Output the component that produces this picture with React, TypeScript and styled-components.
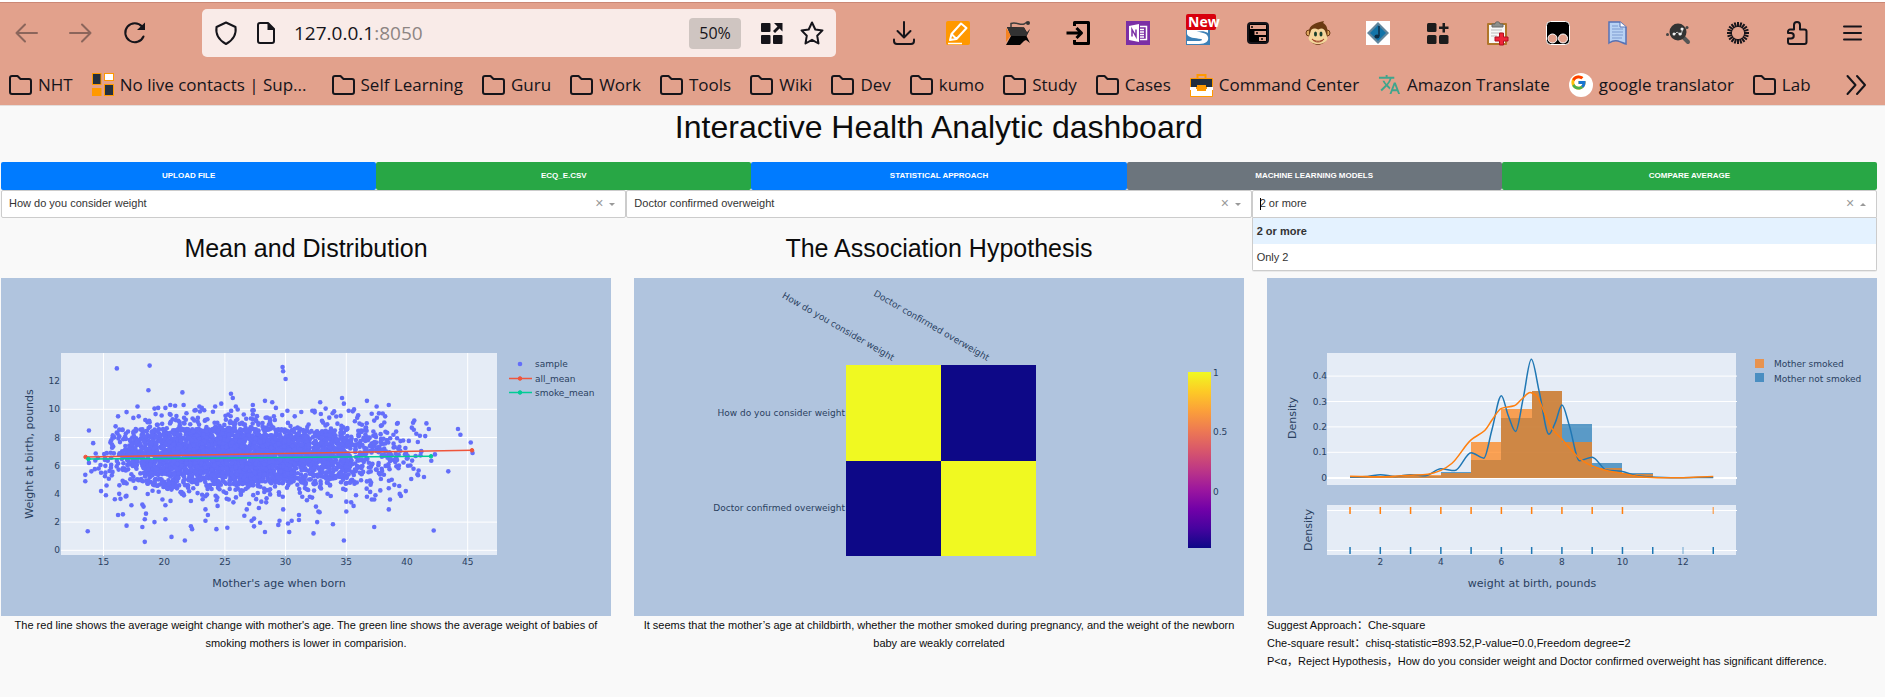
import React, { useMemo } from "react";
import styled, { createGlobalStyle } from "styled-components";
import { FcGoogle } from "react-icons/fc";
import { MdTranslate } from "react-icons/md";

const GlobalStyle = createGlobalStyle`
  * { box-sizing: border-box; }
  body {
    margin: 0;
    background: #f9f9f9;
    color: #0c0c0c;
    font-family: "Liberation Sans", Arial, "Noto Sans CJK SC", sans-serif;
    font-size: 11px;
    line-height: 18px;
  }
  h1, h2, p, ul, figure { margin: 0; padding: 0; }
  button { border: 0; padding: 0; background: none; font: inherit; color: inherit; cursor: pointer; }
`;

/* ---------- browser chrome ---------- */

const Chrome = styled.header`
  display: flex;
  flex-direction: column;
  background: #e2a18c;
  border-top: 2px solid #ffffff;
  border-bottom: 1px solid #e4dedc;
  box-shadow: inset 0 1px 0 #cb8876;
  font-family: "Open Sans", "Noto Sans", sans-serif;
`;

const NavRow = styled.div`
  display: flex;
  align-items: center;
  height: 62px;
  padding: 0 21px 0 15px;
`;

const NavButtons = styled.nav`
  display: flex;
  gap: 30px;
  margin-right: 55px;
`;

const IconButton = styled.button<{ $dim?: boolean }>`
  display: flex;
  flex: none;
  align-items: center;
  justify-content: center;
  width: 24px;
  height: 24px;
  opacity: ${(p) => (p.$dim ? 0.42 : 1)};
  svg { display: block; overflow: visible; }
`;

const AddressBar = styled.div`
  display: flex;
  flex: 0 1 634px;
  align-items: center;
  gap: 16px;
  height: 48px;
  padding: 0 12px 0 12px;
  border-radius: 5px;
  background: #f9ebe8;
`;

const Address = styled.div`
  flex: 1;
  font-size: 19px;
  line-height: 28px;
  color: #15141a;
  span { color: #8d8583; }
`;

const ZoomLevel = styled.button`
  width: 52px;
  height: 31px;
  margin-right: 3px;
  border-radius: 4px;
  background: #cfc5c1;
  font-size: 16px;
  color: #15141a;
`;

const ToolbarIcons = styled.div`
  display: flex;
  flex: 1;
  align-items: center;
  justify-content: space-between;
  margin-left: 56px;
`;

const ExtensionIcons = styled.div`
  display: flex;
  align-items: center;
  gap: 36px;
`;

const BookmarkRow = styled.nav`
  display: flex;
  align-items: center;
  height: 41px;
  padding: 0 16px 0 9px;
`;

const Bookmark = styled.a<{ $wide?: boolean }>`
  display: flex;
  flex: none;
  align-items: center;
  gap: 6px;
  margin-right: ${(p) => (p.$wide ? 25 : 19)}px;
  font-size: 17px;
  line-height: 24px;
  color: #15141a;
  text-decoration: none;
  white-space: nowrap;
  svg { display: block; flex: none; }
`;

const Overflow = styled(IconButton)`
  margin-left: auto;
`;

const stroke = {
  fill: "none",
  stroke: "#15141a",
  strokeWidth: 2,
  strokeLinecap: "round" as const,
  strokeLinejoin: "round" as const,
};

const Glyph = ({ children, size = 24 }: { children: React.ReactNode; size?: number }) => (
  <svg width={size} height={size} viewBox="0 0 24 24" aria-hidden="true">
    {children}
  </svg>
);

const FolderIcon = () => (
  <svg width="23" height="22" viewBox="0 0 23 22" aria-hidden="true">
    <path {...stroke} d="M3 2h5.500l3 3H20a2 2 0 0 1 2 2v11a2 2 0 0 1-2 2H3a2 2 0 0 1-2-2V4a2 2 0 0 1 2-2z" />
  </svg>
);

const ContactsIcon = () => (
  <svg width="22" height="23" viewBox="0 0 22 23" aria-hidden="true">
    <rect x="0.500" y="0.500" width="8.500" height="11" fill="#232f3e" stroke="#f90" />
    <rect x="12.500" y="0.500" width="9" height="7" fill="#fff" stroke="#f90" />
    <rect x="0.500" y="15.500" width="8.500" height="7" fill="#f90" stroke="#f90" />
    <rect x="12.500" y="11.500" width="9" height="11" fill="#232f3e" stroke="#f90" />
  </svg>
);

const CaseIcon = () => (
  <svg width="23" height="24" viewBox="0 0 23 24" aria-hidden="true">
    <path d="M7.500 6V2h8v4" fill="none" stroke="#f90" strokeWidth="2" />
    <rect x="0" y="5" width="23" height="19" rx="1" fill="#f90" />
    <rect x="1" y="6" width="21" height="8" fill="#232f3e" />
    <path d="M1 16h21v7H1z" fill="#fff" />
    <path d="M0 14h6v3H0zM17 14h6v3h-6z" fill="#fff" />
    <rect x="7" y="12" width="9" height="6" fill="#f90" />
  </svg>
);

const GoogleIcon = () => (
  <svg width="24" height="24" viewBox="0 0 24 24" aria-hidden="true">
    <circle cx="12" cy="12" r="12" fill="#fff" />
    <FcGoogle x="1" y="1" width="22" height="22" />
  </svg>
);

const bookmarks: { label: string; icon?: React.ReactNode; wide?: boolean }[] = [
  { label: "NHT" },
  { label: "No live contacts | Sup...", icon: <ContactsIcon />, wide: true },
  { label: "Self Learning" },
  { label: "Guru" },
  { label: "Work" },
  { label: "Tools" },
  { label: "Wiki" },
  { label: "Dev" },
  { label: "kumo" },
  { label: "Study" },
  { label: "Cases" },
  { label: "Command Center", icon: <CaseIcon /> },
  { label: "Amazon Translate", icon: <MdTranslate size={23} color="#3fa58c" /> },
  { label: "google translator", icon: <GoogleIcon /> },
  { label: "Lab" },
];

const rays = Array.from({ length: 20 }, (_, i) => (i * Math.PI) / 10);

type Tool = { name: string; art: React.ReactNode };

const extensions: Tool[] = [
  {
    name: "Notes",
    art: (
      <>
        <rect width="24" height="24" rx="2" fill="#ff9800" />
        <path d="M4 19l1.500-6L15 2.500l5.500 4.500L10.500 18zM5.500 13l5 5" fill="none" stroke="#fff" strokeWidth="2" strokeLinejoin="round" />
        <path d="M2 22.500h14" stroke="#fff" strokeWidth="1.500" />
      </>
    ),
  },
  {
    name: "Reader",
    art: (
      <>
        <path d="M0 7l5 7-5 7z" fill="#f58220" />
        <path d="M1 6l17 .5 3 5L24 8l-3.500 7L24 22l-4-3-2 1-4 4H0l5-9z" fill="#050505" />
        <path d="M1 6l17 .5 3 5L24 8l-3.500 7H5z" fill="#333" />
        <path d="M5 6V2.500c5-2 9 2 13 .5l3-2" fill="none" stroke="#3d3d3d" strokeWidth="1.500" />
        <circle cx="22" cy="2" r="2" fill="#333" />
      </>
    ),
  },
  {
    name: "Sign in",
    art: (
      <path d="M8.500 5V1.500h14v21h-14V19M0.500 12H15M10.500 7l5 5-5 5" fill="none" stroke="#000" strokeWidth="3" strokeLinejoin="round" />
    ),
  },
  {
    name: "OneNote",
    art: (
      <>
        <rect width="24" height="24" fill="#7b2fa5" />
        <path d="M3 5l10-2v18L3 19z" fill="#fff" />
        <path d="M6 15.500v-7l4 7v-7" fill="none" stroke="#7b2fa5" strokeWidth="1.500" />
        <path d="M14 5.500h6.500v13H14M14 8.500h4M14 11h4M14 13.500h4M14 16h4" fill="none" stroke="#fff" strokeWidth="1.500" />
      </>
    ),
  },
  {
    name: "Session",
    art: (
      <>
        <rect y="1" width="24" height="23" fill="#3d80b6" />
        <path d="M1 9v4c1 4 8 4 14 5 2 .5 1 2-3 2H1v3h12c7 0 10-3 9-7-1-5-8-4-12-6V9z" fill="#fff" />
        <path d="M2 9h20v3c-3-2-8-2-12-1z" fill="#fff" />
        <rect y="-7" width="30" height="16" rx="2" fill="#d8000c" />
        <text x="2" y="6" fontSize="14" fontWeight="700" fill="#fff">New</text>
      </>
    ),
  },
  {
    name: "Storage",
    art: (
      <>
        <rect x="2" y="2" width="20" height="20" rx="3" fill="#000" stroke="#15141a" strokeWidth="2" />
        <path d="M4 4h16v4H4zM8.500 10H20v4H8.500zM13 16h7v4h-7z" fill="#e2a18c" />
        <path d="M5 6h2M10 12h2M15 18h2" stroke="#000" strokeWidth="1.500" />
      </>
    ),
  },
  {
    name: "Scripts",
    art: (
      <>
        <circle cx="3" cy="12" r="3" fill="#dca45c" stroke="#6b3a12" />
        <circle cx="21" cy="12" r="3" fill="#dca45c" stroke="#6b3a12" />
        <path d="M3 11C3 4 9 2 18 0c-1 2-1 2 0 2.500C22 5 22 12 21 17c-2 9-16 9-18 0z" fill="#6b3a12" />
        <path d="M4.500 11c1-5 5-3.500 8-2.500 3-2 6-1 7 2.500l2 6c-1 8-18 8-19 0z" fill="#f5d69c" />
        <ellipse cx="9.500" cy="13" rx="1.500" ry="2.500" fill="#173f2d" />
        <ellipse cx="15" cy="13" rx="1.500" ry="2.500" fill="#173f2d" />
        <path d="M6 18c4 3 8 3 12 0-2 4-10 4-12 0z" fill="#fff" stroke="#a34b2a" strokeWidth="1" />
      </>
    ),
  },
  {
    name: "Music",
    art: (
      <>
        <rect width="24" height="24" fill="#fff" />
        <path d="M12 1l11 11-11 11L1 12z" fill="#60859c" />
        <path d="M12 4l8 8-8 8-8-8z" fill="#1274a8" />
        <path d="M13 5v10" stroke="#0c2e46" strokeWidth="1.500" />
        <ellipse cx="11" cy="15.500" rx="2.500" ry="2" fill="#0c2e46" />
      </>
    ),
  },
  {
    name: "Add widget",
    art: (
      <g fill="#1c1c1c">
        <rect x="1" y="2" width="9.500" height="9" rx="1.500" />
        <rect x="1" y="14" width="9.500" height="9" rx="1.500" />
        <rect x="13" y="14" width="9.500" height="9" rx="1.500" />
        <path d="M16.500 2h2.500v3.500h3.500V8H19v3.500h-2.500V8H13V5.500h3.500z" />
      </g>
    ),
  },
  {
    name: "Clipboard",
    art: (
      <>
        <rect x="1" y="2" width="20" height="22" rx="1" fill="#b0762a" />
        <path d="M3 4h16v18H3z" fill="#f8f8f8" />
        <path d="M5 9h11M5 12h11M5 15h6" stroke="#bbb" />
        <path d="M6 6V3h3c0-3 5-3 5 0h3v3z" fill="#8c8f8c" stroke="#666" />
        <path d="M13.500 12h4v4h4.500v4h-4.500v4h-4v-4H9v-4h4.500z" fill="#ef2438" stroke="#b10f20" />
      </>
    ),
  },
  {
    name: "User scripts",
    art: (
      <>
        <rect x="0.500" y="0.500" width="23" height="23" rx="4" fill="#000" stroke="#fff" />
        <circle cx="6.500" cy="17.500" r="4.500" fill="#e2a18c" stroke="#fff" />
        <circle cx="17" cy="17.500" r="4.500" fill="#e2a18c" stroke="#fff" />
      </>
    ),
  },
  {
    name: "Read later",
    art: (
      <>
        <path d="M3 1h11l6 5v17c-3-1-5-2-8-3-4-1-6 0-9 2z" fill="#b8d2f4" stroke="#5672b5" strokeWidth="1.500" />
        <path d="M14 1v5h6" fill="#fff" stroke="#5672b5" />
        <path d="M6 5h6M6 8h11M6 11h11M6 14h11M6 17h10" stroke="#7c9ad0" />
      </>
    ),
  },
  {
    name: "Graph search",
    art: (
      <>
        <path d="M17 16l5 5" stroke="#555" strokeWidth="4" strokeLinecap="round" />
        <circle cx="12" cy="11" r="8.500" fill="#333" />
        <path d="M8 14l3-3 4 3 2-7" fill="none" stroke="#bbb" strokeWidth="1" />
        <g fill="#eee"><circle cx="8" cy="13" r="1.500" /><circle cx="14" cy="13" r="1.500" /><circle cx="16" cy="8" r="1.500" /></g>
        <g fill="#444"><circle cx="1.500" cy="13.500" r="1.500" /><circle cx="21" cy="6.500" r="1.500" /></g>
      </>
    ),
  },
  {
    name: "Brightness",
    art: (
      <g stroke="#15141a" strokeWidth="2">
        {rays.map((a) => (
          <line
            key={a}
            x1={12 + 6 * Math.cos(a)}
            y1={12 + 6 * Math.sin(a)}
            x2={12 + 11 * Math.cos(a)}
            y2={12 + 11 * Math.sin(a)}
          />
        ))}
      </g>
    ),
  },
  {
    name: "Extensions",
    art: (
      <path {...stroke} d="M8 8.500V4a3 3 0 0 1 6 0v4.500h4.500a2 2 0 0 1 2 2V21a2 2 0 0 1-2 2H4a2 2 0 0 1-2-2v-3.500h3a2.500 2.500 0 0 0 0-5.500H2v-1.500a2 2 0 0 1 2-2z" />
    ),
  },
];

const ToolButton = ({ name, art }: Tool) => (
  <IconButton aria-label={name}>
    <Glyph>{art}</Glyph>
  </IconButton>
);

const BrowserChrome = () => (
  <Chrome>
    <NavRow>
      <NavButtons aria-label="History">
        <IconButton $dim aria-label="Back">
          <Glyph><path {...stroke} d="M22 12H1.500M10 3.500L1.500 12l8.500 8.500" /></Glyph>
        </IconButton>
        <IconButton $dim aria-label="Forward">
          <Glyph><path {...stroke} d="M1 12h20.500M13 3.500l8.500 8.500-8.500 8.500" /></Glyph>
        </IconButton>
        <IconButton aria-label="Reload">
          <Glyph>
            <path {...stroke} d="M20.500 15.500A9.500 9.500 0 1 1 19 5.500" />
            <path d="M22 1.500v7.500h-8z" fill="#15141a" />
          </Glyph>
        </IconButton>
      </NavButtons>
      <AddressBar>
        <IconButton aria-label="Site protection">
          <Glyph><path {...stroke} d="M12 1.500l9.500 4.500c1 7-2 13-9.500 17C4.500 19 1.500 13 2.500 6z" /></Glyph>
        </IconButton>
        <IconButton aria-label="Site information">
          <Glyph>
            <path {...stroke} d="M14 2H6a2 2 0 0 0-2 2v16a2 2 0 0 0 2 2h12a2 2 0 0 0 2-2V8z" />
            <path d="M13.500 2L20.500 9H13.500z" fill="#15141a" />
          </Glyph>
        </IconButton>
        <Address>127.0.0.1<span>:8050</span></Address>
        <ZoomLevel>50%</ZoomLevel>
        <IconButton aria-label="Open in grid">
          <Glyph>
            <g fill="#15141a">
              <rect x="1" y="2" width="9.500" height="9" rx="1" />
              <rect x="1" y="14" width="9.500" height="9" rx="1" />
              <rect x="13" y="14" width="9.500" height="9" rx="1" />
              <path d="M14 2h8.500v8.500L19.500 7.500 15 12l-2-2 4.500-4.500z" />
            </g>
          </Glyph>
        </IconButton>
        <IconButton aria-label="Bookmark this page">
          <Glyph><path {...stroke} d="M12 1.500l3.300 7 7.200.900-5.300 5.300 1.300 7.800L12 18.800l-6.500 3.700 1.300-7.800L1.500 9.400l7.200-.900z" /></Glyph>
        </IconButton>
      </AddressBar>
      <ToolbarIcons>
        <ToolButton
          name="Downloads"
          art={<path {...stroke} d="M12 1v15M5.500 10l6.500 6.500 6.500-6.500M2 18.500v1.500a3 3 0 0 0 3 3h14a3 3 0 0 0 3-3v-1.500" />}
        />
        <ExtensionIcons>
          {extensions.map((t) => (
            <ToolButton key={t.name} {...t} />
          ))}
        </ExtensionIcons>
        <ToolButton name="Application menu" art={<path {...stroke} d="M4 5.500h17M4 12h17M4 18.500h17" />} />
      </ToolbarIcons>
    </NavRow>
    <BookmarkRow aria-label="Bookmarks">
      {bookmarks.map((b) => (
        <Bookmark key={b.label} href="#" $wide={b.wide}>
          {b.icon ?? <FolderIcon />}
          {b.label}
        </Bookmark>
      ))}
      <Overflow aria-label="More bookmarks">
        <Glyph><path {...stroke} d="M2.500 3l8 9-8 9M12 3l8 9-8 9" /></Glyph>
      </Overflow>
    </BookmarkRow>
  </Chrome>
);

/* ---------- dashboard ---------- */

const Dashboard = styled.main`
  padding: 0 8px 0 1px;
`;

const Title = styled.h1`
  padding-bottom: 14px;
  font-size: 32px;
  font-weight: 400;
  line-height: 42px;
  text-align: center;
`;

const ActionBar = styled.div`
  display: grid;
  grid-template-columns: repeat(5, 1fr);
`;

const tones = { primary: "#007bff", success: "#28a745", muted: "#6c757d" };

const Action = styled.button<{ $tone: keyof typeof tones }>`
  height: 28px;
  border-radius: 2px;
  background: ${(p) => tones[p.$tone]};
  color: #ffffff;
  font-size: 8px;
  font-weight: 700;
  text-transform: uppercase;
`;

const Filters = styled.div`
  display: grid;
  grid-template-columns: repeat(3, 1fr);
`;

const Combo = styled.div<{ $open?: boolean }>`
  position: relative;
  display: flex;
  align-items: center;
  height: 28px;
  padding: 0 10px 2px 0;
  border: 1px solid #cccccc;
  border-radius: ${(p) => (p.$open ? "2px 2px 0 0" : "2px")};
  background: #ffffff;
  color: #333333;
`;

const Picker = styled.select`
  flex: 1;
  height: 24px;
  padding: 0 7px;
  border: 0;
  outline: 0;
  appearance: none;
  background: transparent;
  color: inherit;
  font: inherit;
`;

const SearchBox = styled.input`
  flex: 1;
  height: 24px;
  padding: 0 7px;
  border: 0;
  outline: 0;
  background: transparent;
  color: inherit;
  font: inherit;
`;

const Caret = styled.span`
  position: absolute;
  left: 7px;
  top: 7px;
  width: 1px;
  height: 12px;
  background: #000000;
`;

const Clear = styled.button`
  width: 8px;
  margin-right: 6px;
  color: #999999;
  font-size: 14px;
`;

const Arrow = styled.span<{ $up?: boolean }>`
  margin-top: 3px;
  border: 3px solid transparent;
  border-width: ${(p) => (p.$up ? "0 3px 3px" : "3px 3px 0")};
  border-top-color: ${(p) => (p.$up ? "transparent" : "#999999")};
  border-bottom-color: ${(p) => (p.$up ? "#999999" : "transparent")};
`;

const Menu = styled.ul`
  position: absolute;
  z-index: 2;
  top: calc(100% + 1px);
  left: -1px;
  right: -1px;
  border: 1px solid #cccccc;
  border-top: 0;
  border-radius: 0 0 2px 2px;
  background: #ffffff;
  box-shadow: 0 1px 0 rgba(0, 0, 0, 0.06);
  list-style: none;
`;

const Option = styled.li<{ $focused?: boolean }>`
  height: 26px;
  padding: 0 4px;
  background: ${(p) => (p.$focused ? "#e4f2ff" : "#ffffff")};
  font-weight: ${(p) => (p.$focused ? 700 : 400)};
  line-height: 26px;
`;

const Panels = styled.section`
  display: grid;
  grid-template-columns: repeat(3, 1fr);
  gap: 23px;
`;

const PanelHead = styled.div`
  display: flex;
  align-items: center;
  justify-content: center;
  height: 60px;
`;

const PanelTitle = styled.h2`
  font-size: 25px;
  font-weight: 400;
  line-height: 30px;
`;

const Chart = styled.svg`
  display: block;
  width: 100%;
  height: auto;
  background: #b0c4de;
  font-family: "DejaVu Sans", Verdana, sans-serif;
  font-size: 9px;
  fill: #2a3f5f;
`;

const Note = styled.figcaption<{ $left?: boolean }>`
  text-align: ${(p) => (p.$left ? "left" : "center")};
`;

const GRID = { stroke: "#ffffff", strokeWidth: 1 };

const OUTLIERS: [number, number][] = [
  [16.1, 12.9], [18.8, 13.1], [29.75, 13], [29.8, 12.7], [30, 12.15], [18.7, 11.35], [21.5, 11.2],
  [25.5, 11.1], [25.65, 10.8], [34.65, 10.8], [36.7, 10.6], [28.3, 10.6], [28.9, 10.5], [32.85, 10.5],
  [34.8, 10.4], [38.5, 10.3], [17.8, 10.2], [37.5, 10.2], [24.7, 10.4], [20.5, 10.3], [21.6, 10.3],
  [20.9, 10.25], [24.2, 10.2], [22.9, 10.2], [23.1, 10.1], [25.9, 10.2], [27.3, 10.3], [20.1, 10.1],
  [19.5, 10.1], [19.2, 10.05], [29.2, 10.1], [30.15, 9.9], [32.2, 9.9], [33.3, 10.05], [34, 9.85],
  [35.2, 9.9], [16.9, 9.8], [16.2, 9.5], [17.9, 9.5], [38, 9.7], [38.2, 9.5], [35.9, 9.4], [37.3, 9.2],
  [40.6, 9.2], [40.5, 9.05], [41.6, 9], [41.8, 8.6], [44.2, 8.6], [44.4, 8.2], [45.25, 7.65],
  [45.4, 6.9], [43.4, 5.6], [42.3, 6.8], [42, 6.35], [41.4, 5.2], [41.5, 8.1], [40.4, 8.7], [42.2, 1.4],
  [13.8, 8.5], [14.15, 7.6], [13.5, 5.35], [13.5, 4.9], [13.7, 1.35], [14, 5.6], [13.8, 6.2],
  [14.6, 5.8], [14.8, 5.5], [14.8, 4.2], [15.2, 3.9], [15.25, 4.6], [16.4, 3.65], [17.3, 3.2],
  [18.2, 3.25], [18.3, 3.1], [16.2, 2.5], [16.6, 2.55], [16.9, 1.75], [18.2, 1.65], [18.4, 2.2],
  [18.5, 2.6], [19.2, 2], [18.4, 0.6], [20.1, 2.2], [20.1, 3.2], [20.6, 0.95], [21.7, 0.7],
  [22.2, 1.7], [22.3, 1.5], [22.2, 3.5], [23.4, 2.9], [23.6, 2.5], [23.4, 2.1], [24.3, 1.5],
  [24.4, 3.15], [24.3, 3.55], [25.2, 1.6], [25.7, 3.4], [26.6, 2.45], [26.8, 2.9], [27, 3.3],
  [27.8, 3], [27.2, 2.1], [27.4, 2.25], [27.9, 1.95], [27.4, 1.7], [28.3, 1.3], [28, 3.45],
  [28.4, 3.4], [29.8, 2.9], [29.5, 2.1], [29.4, 1.8], [30.2, 1.9], [30.5, 2.1], [30.3, 1.3],
  [31.1, 2.5], [31.1, 2.15], [32.6, 2], [32.5, 3.1], [32.7, 2.75], [32.8, 2.7], [32.3, 1.2],
  [33.9, 1.85], [34.8, 0.7], [35, 2.75], [35, 3.45], [35.4, 3.4], [35.6, 3.15], [37.3, 1.65],
  [38.5, 2.9], [38.6, 3.6], [37.1, 3.6], [39.5, 3.85], [39.4, 4], [39.9, 4.2], [38.5, 4.4],
  [35.8, 3.9], [36.7, 3.8], [37.4, 3.9],
];

/* Repeatable sample of births: dense core between 4.6 and 8.6 pounds, thin fringe outside it. */
function makeSample(): [number, number][] {
  let seed = 20117;
  const rnd = () => {
    seed = (seed * 1664525 + 1013904223) % 4294967296;
    return seed / 4294967296;
  };
  const points: [number, number][] = [];
  const gauss = () => Math.sqrt(-2 * Math.log(rnd() + 1e-9)) * Math.cos(2 * Math.PI * rnd());
  while (points.length < 3700) {
    const age = 26 + 6.4 * gauss();
    if (age < 14.2 || age > 41.2) continue;
    if (age < 18 && rnd() > (age - 13) / 5) continue;
    const weight = 6.75 + 1.45 * gauss();
    if (weight > 10 || weight < 3.5) continue;
    if (weight < 4.6 && rnd() > 0.4) continue;
    if (weight > 8.6 && rnd() > 0.45) continue;
    if (age < 15.5 && (weight > 7.2 || weight < 5)) continue;
    points.push([age, weight]);
  }
  return points.concat(OUTLIERS);
}

const ageX = (v: number) => 102.5 + (v - 15) * 12.14;
const lbsY = (v: number) => 272.3 - v * 14.1;

const ScatterChart = () => {
  const sample = useMemo(makeSample, []);
  return (
    <Chart viewBox="0 0 610 338" role="img" aria-label="Weight at birth by mother's age">
      <rect x="60" y="75" width="436" height="202" fill="#e5ecf6" />
      {[15, 25, 30, 35, 45].map((v) => (
        <line key={v} x1={ageX(v)} x2={ageX(v)} y1="75" y2="278" {...GRID} />
      ))}
      {[0, 2, 6, 8, 10].map((v) => (
        <line key={v} x1="60" x2="496" y1={lbsY(v)} y2={lbsY(v)} {...GRID} />
      ))}
      <g fill="#636efa">
        {sample.map(([a, w], i) => (
          <circle key={i} cx={ageX(a)} cy={lbsY(w)} r="2.300" />
        ))}
      </g>
      <g stroke="#ef553b" fill="#ef553b">
        <path d="M84.600 179L471 172.300" strokeWidth="1.500" />
        <circle cx="84.600" cy="179" r="1.800" />
        <circle cx="471" cy="172.300" r="1.800" />
      </g>
      <g stroke="#00cc96" fill="#00cc96">
        <path d="M87.400 181L430 178.300" strokeWidth="1.500" />
        <circle cx="87.400" cy="181" r="1.800" />
        <circle cx="430" cy="178.300" r="1.800" />
      </g>
      <g textAnchor="middle">
        {[15, 20, 25, 30, 35, 40, 45].map((v) => (
          <text key={v} x={ageX(v)} y="287">{v}</text>
        ))}
        <text x="278" y="309" fontSize="11">Mother's age when born</text>
        <text transform="translate(32 176) rotate(-90)" fontSize="11">Weight at birth, pounds</text>
      </g>
      <g textAnchor="end">
        {[0, 2, 4, 6, 8, 10, 12].map((v) => (
          <text key={v} x="59" y={lbsY(v) + 3}>{v}</text>
        ))}
      </g>
      <circle cx="519" cy="86" r="2.300" fill="#636efa" />
      <g stroke="#ef553b" fill="#ef553b"><path d="M508 100.500h23" strokeWidth="1.500" /><circle cx="519" cy="100.500" r="1.800" /></g>
      <g stroke="#00cc96" fill="#00cc96"><path d="M508 114.500h23" strokeWidth="1.500" /><circle cx="519" cy="114.500" r="1.800" /></g>
      <text x="534" y="89">sample</text>
      <text x="534" y="104">all_mean</text>
      <text x="534" y="118">smoke_mean</text>
    </Chart>
  );
};

const PLASMA = ["#0d0887", "#46039f", "#7201a8", "#9c179e", "#bd3786", "#d8576b", "#ed7953", "#fb9f3a", "#fdca26", "#f0f921"];

const HeatmapChart = () => (
  <Chart viewBox="0 0 610 338" role="img" aria-label="Correlation heatmap">
    <defs>
      <linearGradient id="plasma" x1="0" y1="1" x2="0" y2="0">
        {PLASMA.map((c, i) => (
          <stop key={c} offset={i / 9} stopColor={c} />
        ))}
      </linearGradient>
    </defs>
    <rect x="212" y="87" width="95" height="96" fill="#f0f921" />
    <rect x="307" y="87" width="95" height="96" fill="#0d0887" />
    <rect x="212" y="183" width="95" height="95" fill="#0d0887" />
    <rect x="307" y="183" width="95" height="95" fill="#f0f921" />
    <g textAnchor="end">
      <text x="211" y="138">How do you consider weight</text>
      <text x="211" y="233">Doctor confirmed overweight</text>
      <text transform="translate(258 83) rotate(30)">How do you consider weight</text>
      <text transform="translate(353 83) rotate(30)">Doctor confirmed overweight</text>
    </g>
    <rect x="554" y="94" width="23" height="176" fill="url(#plasma)" />
    <text x="579" y="98">1</text>
    <text x="579" y="157">0.5</text>
    <text x="579" y="217">0</text>
  </Chart>
);

const lbX = (v: number) => 113.3 + (v - 2) * 30.27;
const densY = (d: number) => 199.7 - d * 254;

type Pt = [number, number];

const CURVE_NOT_SMOKED: Pt[] = [
  [1, 0.003], [1.58, 0.005], [2, 0.012], [2.5, 0.005], [3, 0.012], [3.5, 0.008], [4, 0.035],
  [4.46, 0.028], [5, 0.098], [5.42, 0.077], [5.69, 0.19], [6, 0.323], [6.22, 0.247], [6.47, 0.182],
  [6.72, 0.312], [6.99, 0.466], [7.25, 0.339], [7.57, 0.171], [7.79, 0.22], [8, 0.286],
  [8.24, 0.207], [8.58, 0.067], [9, 0.081], [9.47, 0.03], [9.96, 0.025], [10.47, 0.008],
  [11.1, 0.002], [12, 0], [13, 0.001],
];
const CURVE_SMOKED: Pt[] = [
  [1, 0.006], [2, 0.004], [3, 0.01], [3.57, 0.014], [4, 0.029], [4.36, 0.056], [4.99, 0.148],
  [5.45, 0.186], [5.69, 0.227], [6, 0.273], [6.42, 0.283], [6.68, 0.31], [6.95, 0.335],
  [7.15, 0.323], [7.41, 0.26], [7.68, 0.192], [8, 0.152], [8.34, 0.105], [8.68, 0.067],
  [9, 0.046], [9.54, 0.026], [10, 0.017], [10.6, 0.004], [11.26, 0], [12, 0], [13, 0.005],
];

/* Monotone cubic through the points, so that peaks stay at their data points. */
function smoothPath(data: Pt[]): string {
  const p = data.map(([v, d]) => [lbX(v), densY(d)]);
  const slope = p.map((_, i) => {
    if (i === 0 || i === p.length - 1) return 0;
    const a = (p[i][1] - p[i - 1][1]) / (p[i][0] - p[i - 1][0]);
    const b = (p[i + 1][1] - p[i][1]) / (p[i + 1][0] - p[i][0]);
    return a * b <= 0 ? 0 : (2 * a * b) / (a + b);
  });
  let path = `M${p[0][0]} ${p[0][1]}`;
  for (let i = 1; i < p.length; i++) {
    const h = (p[i][0] - p[i - 1][0]) / 3;
    path += `C${p[i - 1][0] + h} ${p[i - 1][1] + slope[i - 1] * h} ${p[i][0] - h} ${p[i][1] - slope[i] * h} ${p[i][0]} ${p[i][1]}`;
  }
  return path;
}

const BARS_NOT_SMOKED: Pt[] = [[1, 0.003], [2, 0.005], [3, 0.008], [4, 0.024], [5, 0.07], [6, 0.235], [7, 0.342], [8, 0.212], [9, 0.058], [10, 0.019], [11, 0.003]];
const BARS_SMOKED: Pt[] = [[1, 0.006], [2, 0.008], [3, 0.012], [4, 0.02], [5, 0.14], [6, 0.271], [7, 0.342], [8, 0.141], [9, 0.038], [10, 0.015]];

const Bars = ({ data, color }: { data: Pt[]; color: string }) => (
  <g fill={color} fillOpacity="0.7" shapeRendering="crispEdges">
    {data.map(([v, d]) => (
      <rect key={v} x={lbX(v)} y={densY(d)} width={30.27} height={d * 254} />
    ))}
  </g>
);

const DensityChart = () => (
  <Chart viewBox="0 0 610 338" role="img" aria-label="Density of weight at birth">
    <g fill="#e5ecf6">
      <rect x="60" y="75" width="409" height="132" />
      <rect x="60" y="227" width="409" height="50" />
    </g>
    {[0.1, 0.2, 0.3, 0.4].map((v) => (
      <line key={v} x1="60" x2="470" y1={densY(v)} y2={densY(v)} {...GRID} />
    ))}
    <line x1="60" x2="470" y1="200" y2="200" stroke="#fff" strokeWidth="2" />
    <line x1="60" x2="470" y1="232.500" y2="232.500" {...GRID} />
    <line x1="60" x2="470" y1="272.500" y2="272.500" {...GRID} />
    <Bars data={BARS_NOT_SMOKED} color="#1f77b4" />
    <Bars data={BARS_SMOKED} color="#ff7f0e" />
    <g fill="none" strokeWidth="1.500">
      <path d={smoothPath(CURVE_NOT_SMOKED)} stroke="#1f77b4" />
      <path d={smoothPath(CURVE_SMOKED)} stroke="#ff7f0e" />
    </g>
    <g stroke="#ff7f0e" strokeWidth="1.500">
      {[1, 2, 3, 4, 5, 6, 7, 8, 9, 10, 13].map((v) => (
        <line key={v} x1={lbX(v)} x2={lbX(v)} y1="229" y2="236" strokeOpacity={v === 13 ? 0.6 : 1} />
      ))}
    </g>
    <g stroke="#1f77b4" strokeWidth="1.500">
      {[1, 2, 3, 4, 5, 6, 7, 8, 9, 10, 11, 12, 13].map((v) => (
        <line key={v} x1={lbX(v)} x2={lbX(v)} y1="269" y2="276" strokeOpacity={v === 12 ? 0.4 : 1} />
      ))}
    </g>
    <g textAnchor="middle">
      {[2, 4, 6, 8, 10, 12].map((v) => (
        <text key={v} x={lbX(v)} y="287">{v}</text>
      ))}
      <text x="265" y="309" fontSize="11">weight at birth, pounds</text>
      <text transform="translate(29 140) rotate(-90)" fontSize="11">Density</text>
      <text transform="translate(45 252) rotate(-90)" fontSize="11">Density</text>
    </g>
    <g textAnchor="end">
      {[0, 0.1, 0.2, 0.3, 0.4].map((v) => (
        <text key={v} x="60" y={densY(v) + 3}>{v}</text>
      ))}
    </g>
    <rect x="488" y="81" width="9" height="9" fill="#e8934f" />
    <rect x="488" y="95" width="9" height="9" fill="#4a8ec1" />
    <text x="507" y="89">Mother smoked</text>
    <text x="507" y="104">Mother not smoked</text>
  </Chart>
);

export default function App() {
  return (
    <>
      <GlobalStyle />
      <BrowserChrome />
      <Dashboard>
        <Title>Interactive Health Analytic dashboard</Title>
        <ActionBar>
          <Action $tone="primary">Upload file</Action>
          <Action $tone="success">ECQ_E.csv</Action>
          <Action $tone="primary">Statistical approach</Action>
          <Action $tone="muted">Machine learning models</Action>
          <Action $tone="success">Compare average</Action>
        </ActionBar>
        <Filters>
          {["How do you consider weight", "Doctor confirmed overweight"].map((value, i) => (
            <Combo key={value}>
              <Picker aria-label={i === 0 ? "First variable" : "Second variable"} defaultValue={value}>
                <option>{value}</option>
              </Picker>
              <Clear aria-label="Clear value">×</Clear>
              <Arrow />
            </Combo>
          ))}
          <Combo $open>
            <Caret />
            <SearchBox
              type="text"
              role="combobox"
              aria-label="Category count"
              aria-expanded="true"
              aria-controls="count-options"
              defaultValue="2 or more"
            />
            <Clear aria-label="Clear value">×</Clear>
            <Arrow $up />
            <Menu id="count-options" role="listbox">
              <Option role="option" aria-selected="true" $focused>2 or more</Option>
              <Option role="option" aria-selected="false">Only 2</Option>
            </Menu>
          </Combo>
        </Filters>
        <Panels>
          <article>
            <PanelHead><PanelTitle>Mean and Distribution</PanelTitle></PanelHead>
            <figure>
              <ScatterChart />
              <Note>
                The red line shows the average weight change with mother's age. The green line shows the average weight of babies of smoking mothers is lower in comparision.
              </Note>
            </figure>
          </article>
          <article>
            <PanelHead><PanelTitle>The Association Hypothesis</PanelTitle></PanelHead>
            <figure>
              <HeatmapChart />
              <Note>
                It seems that the mother’s age at childbirth, whether the mother smoked during pregnancy, and the weight of the newborn baby are weakly correlated
              </Note>
            </figure>
          </article>
          <article>
            <PanelHead />
            <figure>
              <DensityChart />
              <Note $left>
                <p>Suggest Approach：Che-square</p>
                <p>Che-square result：chisq-statistic=893.52,P-value=0.0,Freedom degree=2</p>
                <p>P&lt;α，Reject Hypothesis，How do you consider weight and Doctor confirmed overweight has significant difference.</p>
              </Note>
            </figure>
          </article>
        </Panels>
      </Dashboard>
    </>
  );
}
